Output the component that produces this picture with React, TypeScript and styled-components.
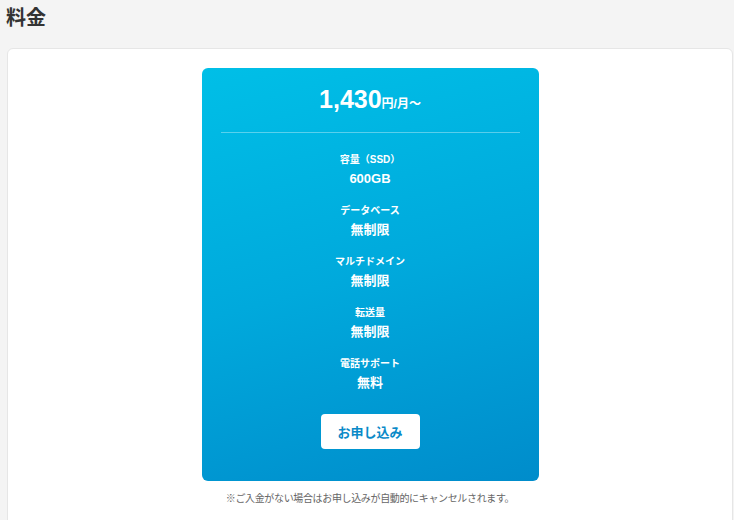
import React from "react";
import styled, { createGlobalStyle } from "styled-components";

const Global = createGlobalStyle`
  html, body { margin: 0; padding: 0; background: #f4f4f4; }
  body { font-family: "Liberation Sans", "Noto Sans CJK JP", sans-serif; color: #333; }
`;

const Page = styled.div`
  padding: 0 1px 0 7px;
`;

const Title = styled.h1`
  margin: 0;
  padding: 4px 0 0 0;
  margin-left: -1px;
  font-size: 20px;
  line-height: 28px;
  font-weight: 700;
  color: #333;
  height: 48px;
  box-sizing: border-box;
`;

const Panel = styled.section`
  background: #fff;
  border: 1px solid #e6e6e6;
  border-radius: 6px;
  padding: 19px 0 12px;
  display: flex;
  flex-direction: column;
  align-items: center;
  min-height: 480px;
  box-sizing: border-box;
`;

const PlanCard = styled.div`
  width: 337px;
  box-sizing: border-box;
  border-radius: 6px;
  background: linear-gradient(165deg, #00bfe7 0%, #00a9dc 50%, #008ccb 100%);
  color: #fff;
  padding: 13px 19px 32px;
  display: flex;
  flex-direction: column;
  align-items: center;
`;

const Price = styled.div`
  font-weight: 700;
  line-height: 36px;
  padding-bottom: 10px;
  width: 100%;
  text-align: center;
  border-bottom: 1px solid rgba(255, 255, 255, 0.35);
`;

const Amount = styled.span`
  font-size: 25px;
`;

const Unit = styled.span`
  font-size: 12px;
`;

const Specs = styled.dl`
  margin: 19px 0 0;
  display: flex;
  flex-direction: column;
  align-items: center;
  gap: 15px;
`;

const Spec = styled.div`
  display: flex;
  flex-direction: column;
  align-items: center;
`;

const SpecLabel = styled.dt`
  font-size: 10px;
  font-weight: 700;
  line-height: 16px;
`;

const SpecValue = styled.dd`
  margin: 1px 0 0;
  font-size: 13px;
  font-weight: 700;
  line-height: 19px;
`;

const Apply = styled.button`
  margin-top: 22px;
  width: 99px;
  height: 35px;
  border: none;
  border-radius: 4px;
  background: #fff;
  color: #0a8ac8;
  font-family: inherit;
  font-size: 13px;
  font-weight: 700;
  cursor: pointer;
`;

const Note = styled.p`
  margin: 11px 0 0;
  font-size: 10px;
  line-height: 14px;
  letter-spacing: -0.35px;
  color: #666;
`;

const specs = [
  { label: "容量（SSD）", value: "600GB" },
  { label: "データベース", value: "無制限" },
  { label: "マルチドメイン", value: "無制限" },
  { label: "転送量", value: "無制限" },
  { label: "電話サポート", value: "無料" },
];

export default function App() {
  return (
    <Page>
      <Global />
      <Title>料金</Title>
      <Panel>
        <PlanCard>
          <Price>
            <Amount>1,430</Amount>
            <Unit>円/月〜</Unit>
          </Price>
          <Specs>
            {specs.map((s) => (
              <Spec key={s.label}>
                <SpecLabel>{s.label}</SpecLabel>
                <SpecValue>{s.value}</SpecValue>
              </Spec>
            ))}
          </Specs>
          <Apply>お申し込み</Apply>
        </PlanCard>
        <Note>※ご入金がない場合はお申し込みが自動的にキャンセルされます。</Note>
      </Panel>
    </Page>
  );
}
